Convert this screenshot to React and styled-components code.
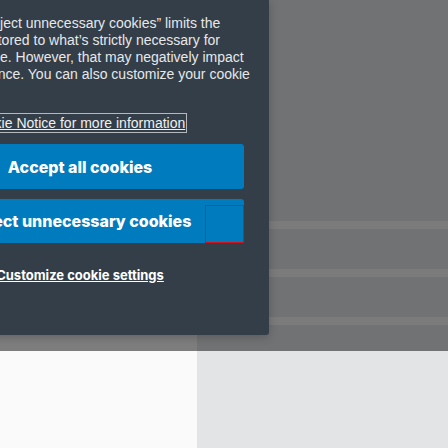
import React from "react";
import styled, { createGlobalStyle } from "styled-components";

const Global = createGlobalStyle`
  html, body {
    margin: 0;
    padding: 0;
    width: 448px;
    height: 448px;
    overflow: hidden;
    font-family: "Liberation Sans", Arial, sans-serif;
  }
`;

const Page = styled.div`
  position: relative;
  width: 448px;
  height: 448px;
  display: grid;
  grid-template-columns: 197px 1fr;
  overflow: hidden;
`;

const Sidebar = styled.aside`
  background: #fafafa;
`;

const Main = styled.main`
  background: #e3e4e6;
  display: flex;
  flex-direction: column;
  gap: 40px;
  padding-top: 221px;
`;

const Stripe = styled.div`
  height: 8px;
  background: #f6f6f6;
`;

const Backdrop = styled.div`
  position: absolute;
  left: 0;
  top: 0;
  width: 448px;
  height: 351px;
  background: rgba(0, 0, 0, 0.5);
`;

const Dialog = styled.section`
  position: absolute;
  left: -109px;
  top: 0;
  width: 378px;
  height: 335px;
  box-sizing: border-box;
  padding: 15px 25px 0;
  background: #333e48;
  border-radius: 0 0 3px 0;
  box-shadow: 0 2px 10px rgba(0, 0, 0, 0.22);
  color: #e6e8ea;
  display: flex;
  flex-direction: column;
`;

const Text = styled.p`
  margin: 0;
  font-size: 14px;
  line-height: 17px;
  white-space: nowrap;
`;

const NoticeRow = styled.div`
  margin-top: 15px;
  font-size: 14px;
  line-height: 17px;
  white-space: nowrap;
`;

const NoticeLink = styled.a`
  color: #eef0f1;
  text-decoration: underline;
  outline: 1px solid #b5b9bd;
  outline-offset: 1px;
`;

const Actions = styled.div`
  margin-top: 12px;
  display: flex;
  flex-direction: column;
  gap: 10px;
`;

const ButtonWrap = styled.div`
  position: relative;
  display: flex;
`;

const Button = styled.button`
  flex: 1;
  height: ${(p) => p.$h || 45}px;
  padding: 0;
  border: 0;
  border-radius: 3px;
  background: #007bbd;
  color: #ffffff;
  font-family: Inter, "Liberation Sans", sans-serif;
  font-size: 16px;
  font-weight: 800;
  text-align: center;
  white-space: nowrap;
`;

const FocusRing = styled.span`
  position: absolute;
  right: 0;
  bottom: 0;
  width: 39px;
  height: 38px;
  box-sizing: border-box;
  border: 1px solid #d0141c;
  pointer-events: none;
`;

const Customize = styled.a`
  margin-top: 24px;
  align-self: center;
  color: #ffffff;
  font-family: Inter, "Liberation Sans", sans-serif;
  font-size: 13px;
  font-weight: 700;
  text-decoration: underline;
  white-space: nowrap;
`;

export default function App() {
  return (
    <Page>
      <Global />
      <Sidebar />
      <Main>
        <Stripe />
        <Stripe />
        <Stripe />
      </Main>
      <Backdrop />
      <Dialog>
        <Text>
          Selecting “Reject unnecessary cookies” limits the
          <br />
          the cookies stored to what’s strictly necessary for
          <br />
          your web page. However, that may negatively impact
          <br />
          site performance. You can also customize your cookie
          <br />
          settings.
        </Text>
        <NoticeRow>
          <NoticeLink>See our Cookie Notice for more information</NoticeLink>
        </NoticeRow>
        <Actions>
          <ButtonWrap>
            <Button>Accept all cookies</Button>
          </ButtonWrap>
          <ButtonWrap>
            <Button $h={44}>Reject unnecessary cookies</Button>
            <FocusRing />
          </ButtonWrap>
        </Actions>
        <Customize>Customize cookie settings</Customize>
      </Dialog>
    </Page>
  );
}
